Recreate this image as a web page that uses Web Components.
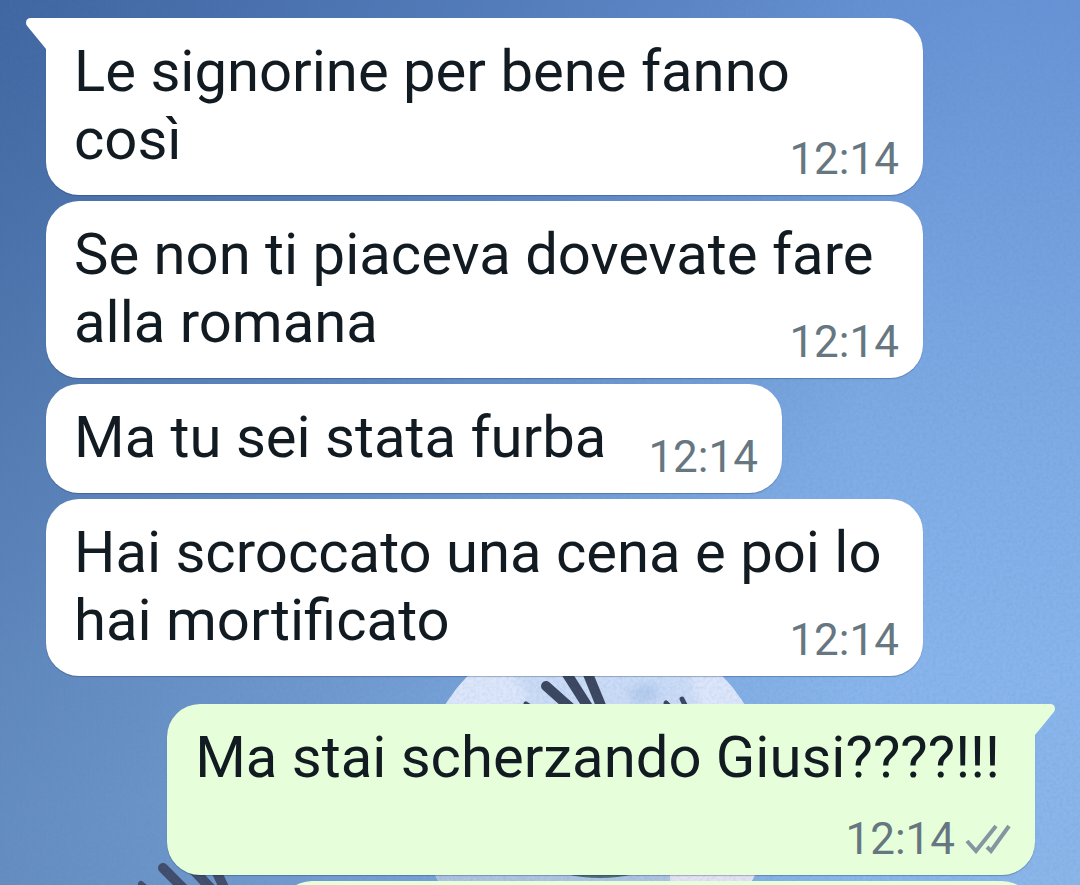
<!DOCTYPE html>
<html lang="it">
<head>
<meta charset="UTF-8">
<meta name="viewport" content="width=device-width, initial-scale=1">
<title>Chat</title>
<style>
    body { margin: 0; font-family: Roboto, sans-serif; }
</style>
</head>
<body>
<chat-screen>
    <chat-message time="12:14" side="in" tail>Le signorine per bene fanno così</chat-message>
    <chat-message time="12:14" side="in">Se non ti piaceva dovevate fare alla romana</chat-message>
    <chat-message time="12:14" side="in" layout="inline">Ma tu sei stata furba</chat-message>
    <chat-message time="12:14" side="in">Hai scroccato una cena e poi lo hai mortificato</chat-message>
    <chat-message time="12:14" side="out" layout="stacked" tail read>Ma stai scherzando Giusi????!!!</chat-message>
    <chat-message side="out" layout="pending"></chat-message>
</chat-screen>

<script>
// --- Wallpaper ---

class ChatWallpaper extends HTMLElement {
    constructor() {
        super();
        this.attachShadow({ mode: 'open' });
    }

    connectedCallback() {
        this.shadowRoot.innerHTML = `
            <style>
                :host {
                    display: block;
                    background:
                        radial-gradient(ellipse at 0% 0%, rgba(36, 70, 125, 0.35), transparent 65%),
                        linear-gradient(90deg, rgba(40, 75, 125, 0.38), transparent 80%),
                        linear-gradient(180deg, #6793d6 0%, #729edd 22%, #7eabe4 48%, #88b5ec 75%, #8ab6ea 100%);
                }
                svg { display: block; width: 100%; height: 100%; }
            </style>
            <svg viewBox="0 0 1080 885" preserveAspectRatio="xMidYMid slice" aria-hidden="true">
                <defs>
                    <filter id="grain" x="0" y="0" width="100%" height="100%">
                        <feTurbulence type="fractalNoise" baseFrequency="0.3" numOctaves="3" seed="4"/>
                        <feColorMatrix values="0 0 0 0 0.1  0 0 0 0 0.2  0 0 0 0 0.4  0.5 0 0 0 -0.18"/>
                    </filter>
                    <filter id="soft"><feGaussianBlur stdDeviation="5"/></filter>
                    <clipPath id="disc"><circle cx="595" cy="799" r="177"/></clipPath>
                </defs>
                <!-- moon -->
                <circle cx="595" cy="799" r="177" fill="#cbdcf7"/>
                <g clip-path="url(#disc)">
                    <path d="M455 670h55l20 30-30 12h-60zM690 670l60 10v40h-50z" fill="#dde7fb" filter="url(#soft)"/>
                    <path d="M628 690l24-8 10 14-26 12z" fill="#b6cdef" filter="url(#soft)"/>
                    <path d="M430 870h240v15H430z" fill="#adc4e2"/>
                    <path d="M670 870h100v15H670z" fill="#e3e4f3"/>
                </g>
                <!-- feathers -->
                <g stroke="#3b465f" stroke-linecap="round" fill="none">
                    <path stroke-width="10" d="M546 686l36 32M567 674l28 44M588 674l18 44"/>
                    <path stroke-width="5" d="M526 704l12 8M666 703l10 10"/>
                    <path stroke-width="5" d="M682 699l6 12"/>
                    <path stroke-width="10" d="M163 868l28 28M186 862l32 34M214 866l12 26" stroke="#414c6b"/>
                    <path stroke-width="6" d="M141 884l12 10" stroke="#414c6b"/>
                </g>
                <path d="M565 874q35 8 70 0z" fill="#4c6d72"/>
                <rect width="1080" height="885" filter="url(#grain)" opacity="0.5"/>
            </svg>
        `;
    }
}

// --- Message bubble ---

class ChatMessage extends HTMLElement {
    constructor() {
        super();
        this.attachShadow({ mode: 'open' });
    }

    connectedCallback() {
        const time = this.getAttribute('time') || '';
        const out = this.getAttribute('side') === 'out';

        const tail = !this.hasAttribute('tail') ? '' : out
            ? '<svg class="tail" viewBox="0 0 20 31" aria-hidden="true"><path d="M0 0H15Q20 0 20 5Q20 7 18 9L0 31Z"/></svg>'
            : '<svg class="tail" viewBox="0 0 20 31" aria-hidden="true"><path d="M20 0H5Q0 0 0 5Q0 7 2 9L20 31Z"/></svg>';

        const ticks = !this.hasAttribute('read') ? '' : `
            <svg class="ticks" viewBox="0 0 46 30" role="img" aria-label="Consegnato">
                <path d="M2 17l9 10L31 2M22 23l4 4L44 2"/>
            </svg>`;

        this.shadowRoot.innerHTML = `
            <style>
                :host {
                    display: block;
                    position: relative;
                    box-sizing: border-box;
                    width: fit-content;
                    max-width: 81.2vw;
                    --bubble: #fff;
                    background: var(--bubble);
                    border-radius: 33px;
                    box-shadow: 0 1px 1px rgba(20, 40, 80, 0.3);
                }
                :host([side="out"]) { --bubble: #e6ffda; align-self: flex-end; }
                :host([side="out"][tail]) { margin-top: 22px; border-top-right-radius: 0; }
                :host([side="in"][tail]) { border-top-left-radius: 0; }
                :host([layout="pending"]) { width: 70vw; height: 108px; }
                .bubble { display: grid; }
                .text {
                    grid-area: 1 / 1;
                    margin: 0;
                    padding: 19px 35px 22px 28px;
                    font-size: 58px;
                    line-height: 68px;
                    color: #111b21;
                }
                /* the time sits in the free end of the last text line */
                .meta {
                    grid-area: 1 / 1;
                    align-self: end;
                    justify-self: end;
                    display: flex;
                    align-items: center;
                    gap: 10px;
                    padding: 0 24px 10px;
                    font-size: 44px;
                    line-height: 52px;
                    color: #667781;
                }
                :host([layout="inline"]) .text { padding-right: 18px; }
                :host([layout="inline"]) .meta { grid-area: 1 / 2; }
                :host([layout="stacked"]) .meta { grid-area: 2 / 1; }
                .tail {
                    position: absolute;
                    top: 0;
                    right: 100%;
                    width: 20px;
                    height: 31px;
                    fill: var(--bubble);
                }
                :host([side="out"]) .tail { right: auto; left: 100%; }
                .ticks {
                    width: 46px;
                    height: 30px;
                    fill: none;
                    stroke: #8696a0;
                    stroke-width: 4;
                }
            </style>
            ${tail}
            ${time ? `<div class="bubble">
                <p class="text"><slot></slot></p>
                <span class="meta"><time>${time}</time>${ticks}</span>
            </div>` : ''}
        `;
    }
}

// --- Screen ---

class ChatScreen extends HTMLElement {
    constructor() {
        super();
        this.attachShadow({ mode: 'open' });
    }

    connectedCallback() {
        this.shadowRoot.innerHTML = `
            <style>
                :host {
                    display: block;
                    position: relative;
                    height: 100vh;
                    overflow: hidden;
                }
                chat-wallpaper { position: absolute; inset: 0; }
                .messages {
                    position: relative;
                    display: flex;
                    flex-direction: column;
                    gap: 6px;
                    padding: 18px 45px 0 46px;
                }
            </style>
            <chat-wallpaper></chat-wallpaper>
            <main class="messages"><slot></slot></main>
        `;
    }
}

customElements.define('chat-wallpaper', ChatWallpaper);
customElements.define('chat-message', ChatMessage);
customElements.define('chat-screen', ChatScreen);
</script>
</body>
</html>
